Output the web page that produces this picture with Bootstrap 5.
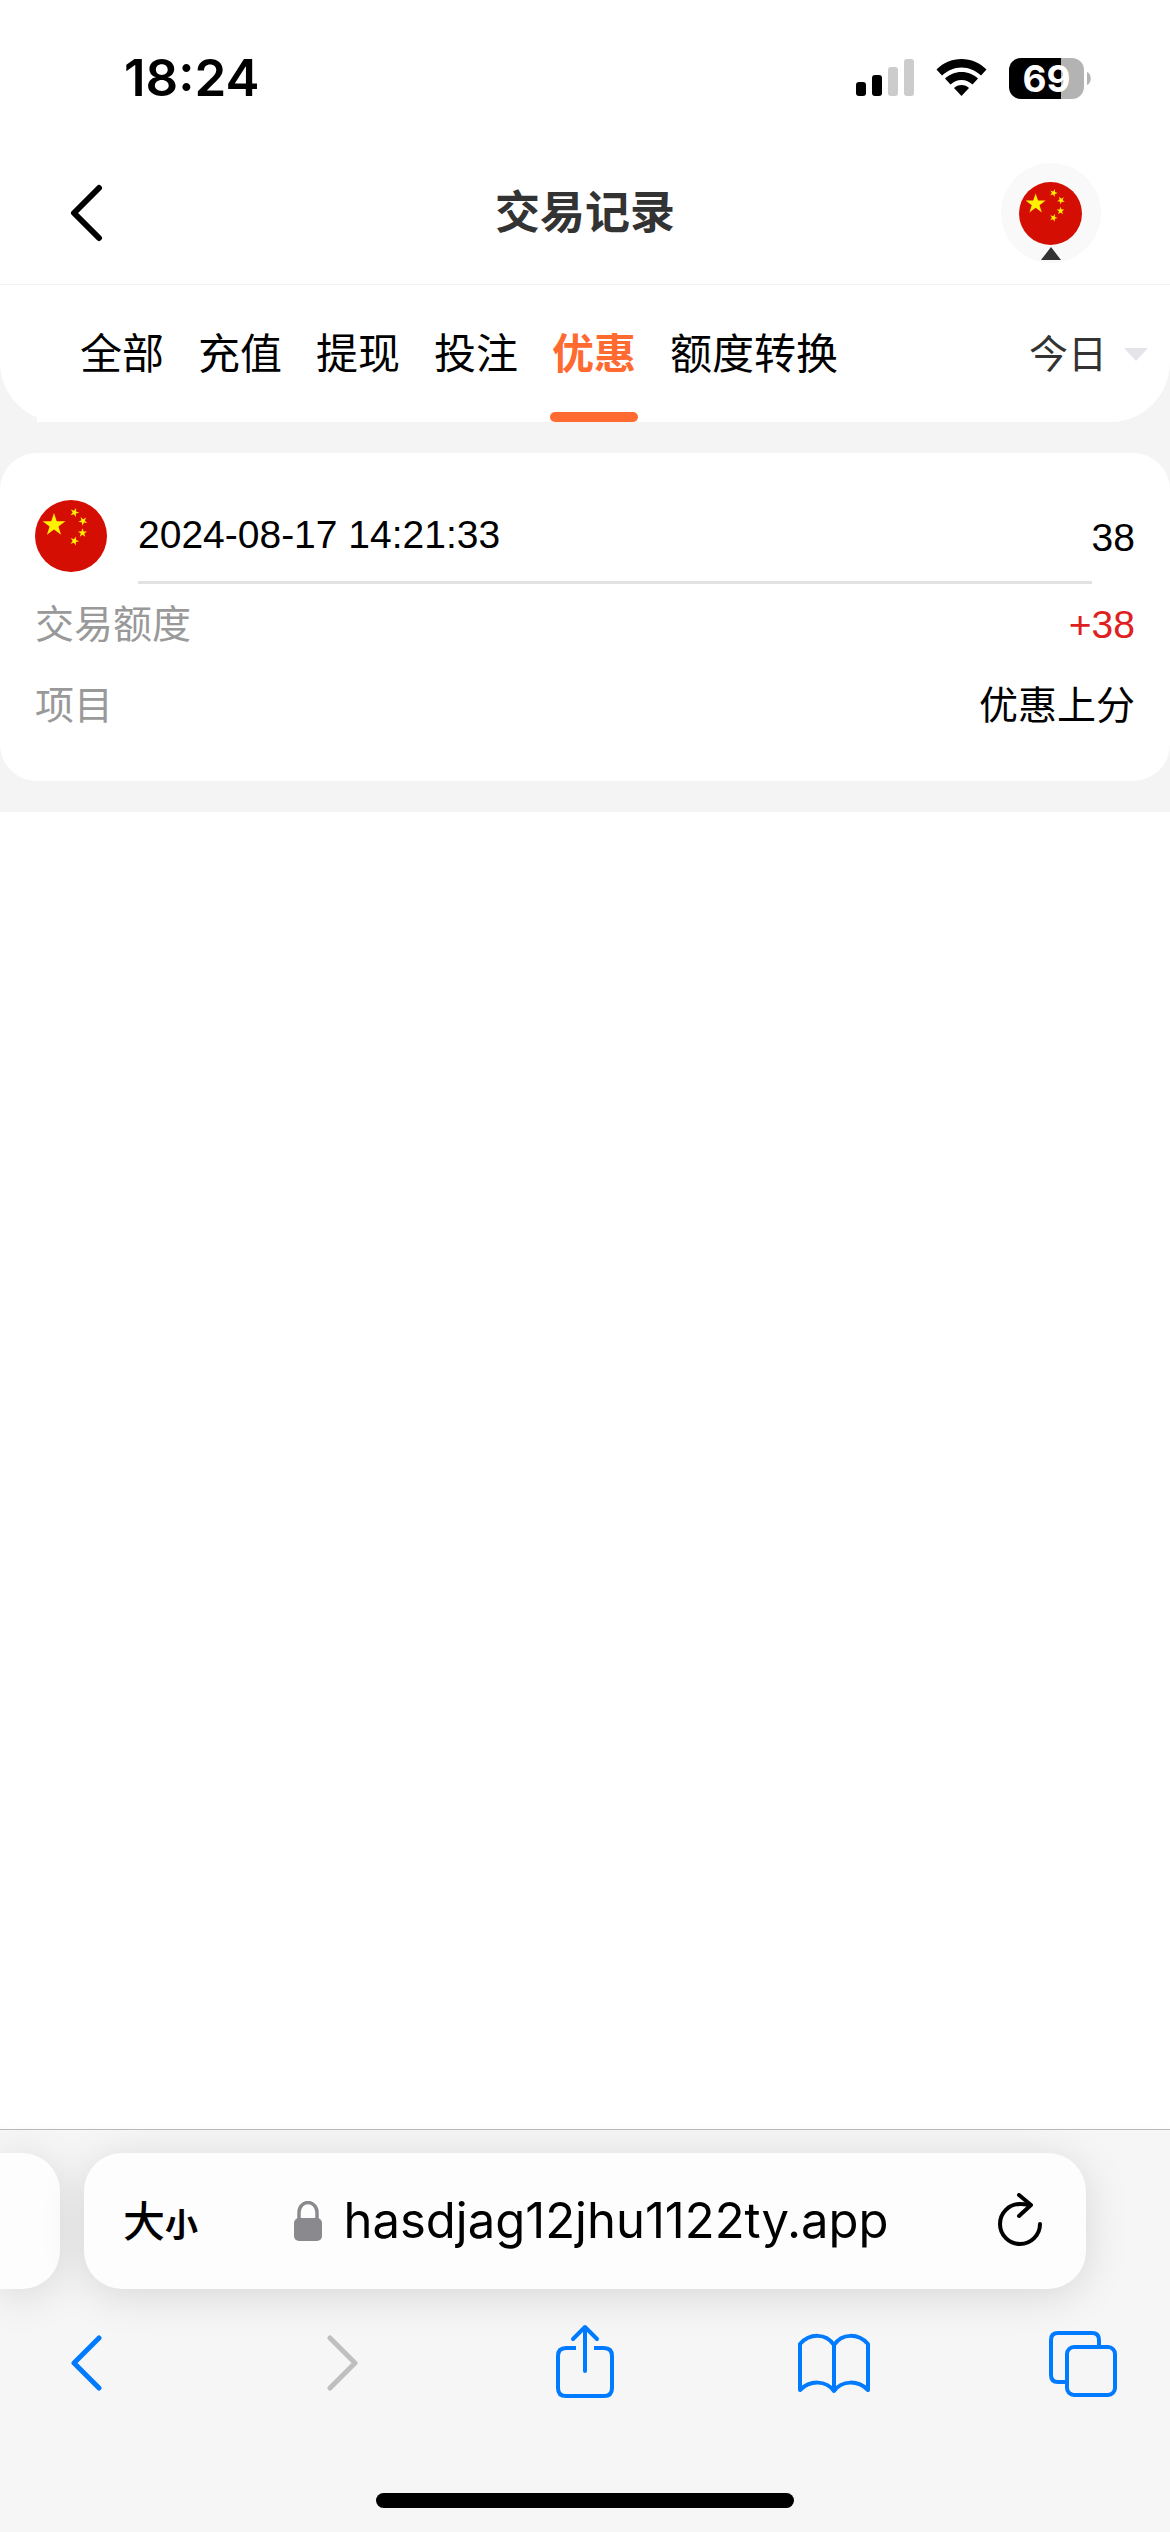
<!DOCTYPE html>
<html lang="zh-CN">
<head>
<meta charset="utf-8">
<meta name="viewport" content="width=device-width, initial-scale=1">
<title>交易记录</title>
<link href="https://cdn.jsdelivr.net/npm/bootstrap@5.3.0/dist/css/bootstrap.min.css" rel="stylesheet">
<style>
  body { font-family: "Liberation Sans", "Noto Sans CJK SC", sans-serif; font-size: 39px; line-height: 60px; color: #000; background: #fff; }
  svg { display: block; flex: none; }
  .ui-font { font-family: Inter, "Noto Sans CJK SC", sans-serif; }
  .plain-btn { border: 0; background: none; padding: 0; color: inherit; line-height: inherit; }
  .status-bar { padding: 48px 79px 0 124px; height: 118px; }
  .clock { font-size: 51px; font-weight: 600; }
  .status-icons { gap: 22px; height: 60px; }
  .battery { gap: 3px; }
  .battery-level { width: 75px; height: 41px; border-radius: 12px; background: linear-gradient(90deg, #000 70%, #b3b3b3 70%); color: #fff; font-size: 37px; line-height: 41px; font-weight: 700; text-align: center; }
  .app-header { padding: 45px 69px 21px; border-bottom: 1px solid #f3f3f3; }
  .app-title { font-size: 45px; line-height: 60px; font-weight: 700; color: #333; padding-top: 2px; }
  .header-side { width: 100px; }
  .avatar-btn { width: 100px; height: 100px; border-radius: 50%; background: #f9f9f9; padding-top: 19px; gap: 2px; }
  .page-body { background: #f4f4f4; padding-bottom: 31px; }
  .filter-bar { background: #fff; border-radius: 0 0 60px 60px; padding: 0 22px 0 37px; height: 137px; }
  .filter-tabs { background: #fff; padding-left: 41px; gap: 30px; font-size: 42px; }
  .filter-tabs .nav-link { color: #000; padding: 40px 2px 27px; border-bottom: 10px solid transparent; border-radius: 0; position: relative; white-space: nowrap; }
  .filter-tabs .nav-link.active { color: #ff6a30; font-weight: 700; }
  .filter-tabs .nav-link.active::after { content: ""; position: absolute; left: 0; right: 0; bottom: -10px; height: 10px; border-radius: 5px; background: #ff6a30; }
  .period-btn { color: #333; gap: 17px; padding-top: 2px; }
  .record { background: #fff; border-radius: 37px; margin-top: 31px; padding: 32px 35px 35px; }
  .record-head { height: 99px; }
  .record-flag { margin: 15px 31px 0 0; }
  .record-time { border-bottom: 3px solid #e2e2e2; padding-top: 20px; }
  .record-total { padding-top: 23px; }
  .record-row { line-height: 81px; }
  .record-row dt { color: #999; font-weight: 400; }
  .gain { color: #e02020; }
  .browser-bar { background: #f6f6f6; border-top: 1px solid #b9b9b9; box-shadow: 0 -1px 20px rgba(0,0,0,.02); overflow: hidden; }
  .address-row { gap: 24px; padding: 23px 84px 0 0; }
  .address-card { background: #fdfdfd; box-shadow: 0 6px 44px rgba(0,0,0,.13); height: 136px; border-radius: 38px; }
  .tab-peek { width: 60px; border-radius: 0 38px 38px 0; }
  .address-main { padding: 0 44px 0 39px; }
  .text-size { font-size: 42px; font-weight: 500; padding-top: 4px; }
  .text-size span { font-size: 33px; font-weight: 700; }
  .url { font-size: 49px; gap: 21px; margin-right: 12px; }
  .tool-row { padding: 34px 51px 0; height: 146px; }
  .tool-row .plain-btn { width: 72px; display: flex; justify-content: center; }
  .home-pill { width: 418px; height: 15px; border-radius: 8px; background: #000; margin: 58px auto 24px; }
</style>
</head>
<body class="d-flex flex-column min-vh-100">
<svg width="0" height="0" class="position-absolute" aria-hidden="true">
  <defs>
    <path id="star" d="M0-10 2.3-3.1H9.5L3.7 1.2 5.9 8.1 0 3.8-5.9 8.1-3.7 1.2-9.5-3.1H-2.3Z"/>
    <symbol id="flag" viewBox="0 0 72 72">
      <circle cx="36" cy="36" r="36" fill="#d40e02"/>
      <g fill="#fff100">
        <use href="#star" transform="translate(19 25) scale(1.2)"/>
        <use href="#star" transform="translate(39.500 12.500) rotate(20) scale(.47)"/>
        <use href="#star" transform="translate(48 21) rotate(42) scale(.47)"/>
        <use href="#star" transform="translate(47.500 33) scale(.47)"/>
        <use href="#star" transform="translate(39.500 41) rotate(20) scale(.47)"/>
      </g>
    </symbol>
  </defs>
</svg>

<div class="status-bar ui-font d-flex justify-content-between align-items-start">
  <div class="clock">18:24</div>
  <div class="status-icons d-flex align-items-center">
    <svg width="58" height="38" viewBox="0 0 58 38"><g fill="#ccc"><rect x="32" y="8" width="10" height="29" rx="3"/><rect x="48" width="10" height="37" rx="3"/></g><rect y="23" width="10" height="14" rx="3"/><rect x="16" y="16" width="10" height="21" rx="3"/></svg>
    <svg width="51" height="38" viewBox="0 0 51 38"><path d="M25.500 0C35 0 44 4 50.500 10.500L45 16.500C39.500 11.500 33 8.500 25.500 8.500S11.500 11.500 6 16.500L.5 10.500C7 4 16 0 25.500 0Z"/><path d="M25.500 13C32 13 37.500 15.500 42 19.500L36.500 25.500C33.500 22.800 30 21 25.500 21S17.500 22.800 14.500 25.500L9 19.500C13.500 15.500 19 13 25.500 13Z"/><path d="M25.500 26C28.500 26 31 27 33 29L25.500 37 18 29C20 27 22.500 26 25.500 26Z"/></svg>
    <div class="battery d-flex align-items-center"><div class="battery-level">69</div><svg width="4" height="13" viewBox="0 0 4 13"><path d="M0 0c5 2 5 11 0 13Z" fill="#b3b3b3"/></svg></div>
  </div>
</div>

<header class="app-header d-flex justify-content-between align-items-center">
  <button class="plain-btn header-side" type="button" aria-label="返回"><svg width="36" height="58" viewBox="0 0 36 58" fill="none" stroke="#000" stroke-width="6" stroke-linecap="round" stroke-linejoin="round"><path d="M30 4 5 29 30 54"/></svg></button>
  <h1 class="app-title mb-0">交易记录</h1>
  <button class="plain-btn avatar-btn d-flex flex-column align-items-center" type="button" aria-label="地区"><svg width="63" height="63"><use href="#flag"/></svg><svg width="20" height="13" viewBox="0 0 20 13"><path d="M10 0 20 13H0Z" fill="#333"/></svg></button>
</header>

<main class="flex-grow-1">
  <div class="page-body">
    <div class="filter-bar d-flex justify-content-between">
      <nav class="nav filter-tabs flex-nowrap">
        <a class="nav-link" href="#">全部</a>
        <a class="nav-link" href="#">充值</a>
        <a class="nav-link" href="#">提现</a>
        <a class="nav-link" href="#">投注</a>
        <a class="nav-link active" aria-current="page" href="#">优惠</a>
        <a class="nav-link" href="#">额度转换</a>
      </nav>
      <button class="plain-btn period-btn d-flex align-items-center" type="button">今日<svg width="24" height="13" viewBox="0 0 24 13"><path d="M0 0H24L12 13Z" fill="#e3e5e8"/></svg></button>
    </div>

    <article class="record">
      <div class="record-head d-flex align-items-stretch">
        <svg class="record-flag" width="72" height="72"><use href="#flag"/></svg>
        <div class="record-time flex-grow-1">2024-08-17 14:21:33</div>
        <div class="record-total">38</div>
      </div>
      <dl class="m-0">
        <div class="record-row d-flex justify-content-between"><dt>交易额度</dt><dd class="gain m-0">+38</dd></div>
        <div class="record-row d-flex justify-content-between"><dt>项目</dt><dd class="m-0">优惠上分</dd></div>
      </dl>
    </article>
  </div>
</main>

<footer class="browser-bar ui-font">
  <div class="address-row d-flex">
    <div class="address-card tab-peek"></div>
    <div class="address-card address-main flex-grow-1 d-flex align-items-center justify-content-between">
      <button class="plain-btn text-size" type="button" aria-label="文字大小">大<span>小</span></button>
      <div class="url d-flex align-items-center">
        <svg width="28" height="40" viewBox="0 0 28 40"><rect y="17" width="28" height="23" rx="5" fill="#8a8a8e"/><path d="M5 18V11.500a9 10 0 0 1 18 0V18" fill="none" stroke="#8a8a8e" stroke-width="3.500"/></svg>
        <span>hasdjag12jhu1122ty.app</span>
      </div>
      <button class="plain-btn" type="button" aria-label="刷新"><svg width="45" height="56" viewBox="0 0 45 56" fill="none" stroke="#000" stroke-width="4" stroke-linecap="round" stroke-linejoin="round"><path d="M32 12Q28 11 23 11A20 20 0 1 0 43 31"/><path d="M22 2 34 12 22 23"/></svg></button>
    </div>
  </div>
  <div class="tool-row d-flex justify-content-between align-items-start">
    <button class="plain-btn" type="button" aria-label="后退"><svg width="32" height="76" viewBox="0 0 32 76" fill="none" stroke="#007aff" stroke-width="5" stroke-linecap="round" stroke-linejoin="round"><path d="M28 15 3 40 28 65"/></svg></button>
    <button class="plain-btn" type="button" aria-label="前进" disabled><svg width="44" height="76" viewBox="-12 0 44 76" fill="none" stroke="#bfbfbf" stroke-width="5" stroke-linecap="round" stroke-linejoin="round"><path d="M4 15 29 40 4 65"/></svg></button>
    <button class="plain-btn" type="button" aria-label="分享"><svg width="58" height="76" viewBox="0 0 58 76" fill="none" stroke="#007aff" stroke-width="4"><path d="M20 25H10Q2 25 2 33V65Q2 73 10 73H48Q56 73 56 65V33Q56 25 48 25H38"/><path d="M29 48V5M17 16 29 4 41 16" stroke-linecap="round" stroke-linejoin="round"/></svg></button>
    <button class="plain-btn" type="button" aria-label="书签"><svg width="72" height="76" viewBox="0 0 72 76" fill="none" stroke="#007aff" stroke-width="4" stroke-linejoin="round"><path d="M36 22C28 10 12 10 2 21V67C12 57 28 57 36 68C44 57 60 57 70 67V21C60 10 44 10 36 22V68"/></svg></button>
    <button class="plain-btn" type="button" aria-label="标签页"><svg width="68" height="76" viewBox="0 0 68 76" fill="none" stroke="#007aff" stroke-width="4"><path d="M18 59H9Q2 59 2 52V17Q2 10 9 10H43Q50 10 50 17V24"/><rect x="18" y="24" width="48" height="48" rx="7"/></svg></button>
  </div>
  <div class="home-pill"></div>
</footer>
<script src="https://cdn.jsdelivr.net/npm/bootstrap@5.3.0/dist/js/bootstrap.bundle.min.js"></script>
</body>
</html>
